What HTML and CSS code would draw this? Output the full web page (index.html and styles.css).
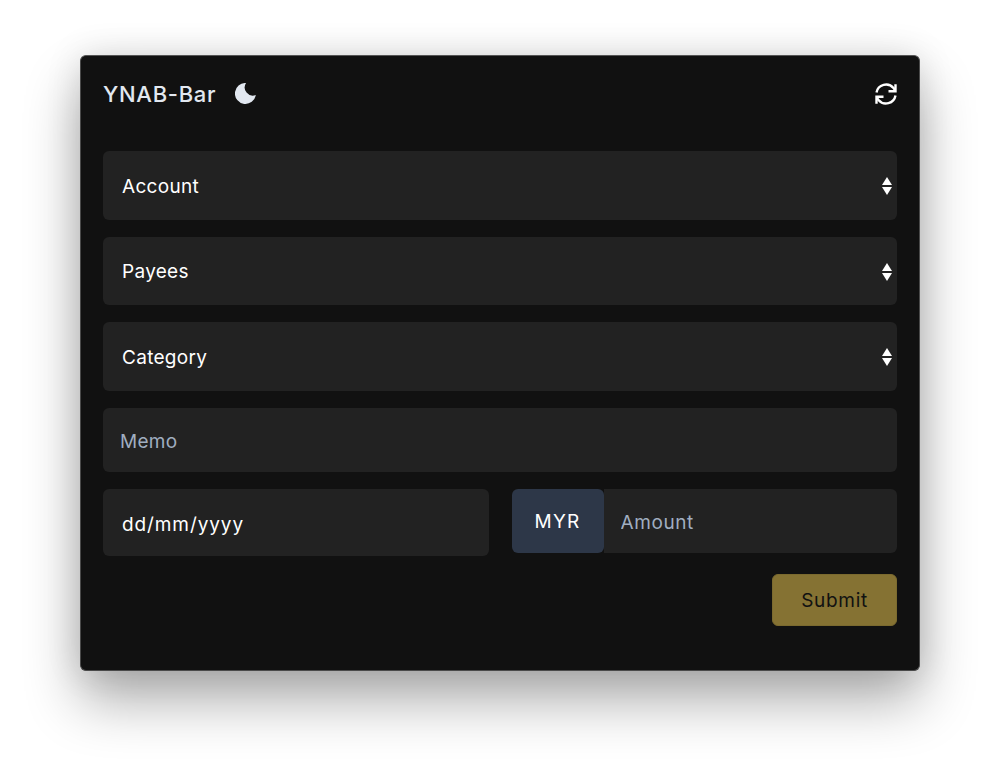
FILE: index.html
```html
<!DOCTYPE html>
<html lang="en">
<head>
    <meta charset="UTF-8">
    <title>YNAB-Bar</title>
    <link rel="stylesheet" href="styles.css">
</head>
<body>
    <main class="window">
        <header class="top-bar">
            <div class="brand">
                <h1>YNAB-Bar</h1>
                <button class="icon-btn" type="button" aria-label="Toggle theme">
                    <svg width="21" height="21" viewBox="0 0 20 20" fill="#e2e8f0"><path d="M10.5 0A10 10 0 1 0 19.8 11.5A7.8 7.8 0 0 1 10.5 0z"/></svg>
                </button>
            </div>
            <button class="icon-btn refresh-btn" type="button" aria-label="Refresh">
                <svg width="24" height="24" viewBox="0 0 24 24" fill="none" stroke="#fff" stroke-width="2.4"><path d="M2.5 10.5A9.7 9.7 0 0 1 19.5 6L21 8"/><path d="M21.5 2.2v7h-7"/><path d="M21.5 13.5A9.7 9.7 0 0 1 4.5 18L3 16"/><path d="M2.5 21.8v-7h7"/></svg>
            </button>
        </header>

        <form class="entry-form">
            <div class="select-wrap">
                <select class="field select-field"><option>Account</option></select>
                <svg class="select-arrows" width="10" height="20" viewBox="0 0 10 20" fill="#fff"><path d="M5 1l5 8H0z"/><path d="M5 19l5-8H0z"/></svg>
            </div>
            <div class="select-wrap">
                <select class="field select-field"><option>Payees</option></select>
                <svg class="select-arrows" width="10" height="20" viewBox="0 0 10 20" fill="#fff"><path d="M5 1l5 8H0z"/><path d="M5 19l5-8H0z"/></svg>
            </div>
            <div class="select-wrap">
                <select class="field select-field"><option>Category</option></select>
                <svg class="select-arrows" width="10" height="20" viewBox="0 0 10 20" fill="#fff"><path d="M5 1l5 8H0z"/><path d="M5 19l5-8H0z"/></svg>
            </div>
            <input class="field memo-field" type="text" placeholder="Memo">
            <div class="split-row">
                <input class="field date-field" type="text" value="dd/mm/yyyy">
                <div class="amount-group">
                    <span class="currency">MYR</span>
                    <input class="field amount-field" type="text" placeholder="Amount">
                </div>
            </div>
            <div class="actions">
                <button class="submit-btn" type="submit">Submit</button>
            </div>
        </form>
    </main>
</body>
</html>
```

FILE: styles.css
```css
* {
    padding: 0;
    margin: 0;
    box-sizing: border-box;
}

body {
    font-family: Inter, "Liberation Sans", sans-serif;
    background-color: #fff;
    height: 776px;
    padding: 55px 80px 0;
    overflow: hidden;
}

/* App window */
.window {
    height: 616px;
    padding: 0 22px;
    background-color: #111;
    border: 1px solid #4a4a4a;
    border-top-color: #555;
    border-radius: 6px;
    box-shadow: 0 30px 55px rgba(0, 0, 0, 0.32), 0 0 36px rgba(0, 0, 0, 0.12);
}

.top-bar {
    display: flex;
    justify-content: space-between;
    align-items: center;
    height: 75px;
}

.brand {
    display: flex;
    align-items: center;
    gap: 19px;
}

.brand h1 {
    font-size: 22px;
    font-weight: 500;
    letter-spacing: 0.7px;
    color: #e2e8f0;
}

.icon-btn {
    display: flex;
    background: none;
    border: none;
}

.refresh-btn {
    margin-right: -1px;
}

/* Form */
.entry-form {
    display: flex;
    flex-direction: column;
    gap: 17px;
    margin-top: 20px;
}

.field {
    display: block;
    width: 100%;
    border: none;
    outline: none;
    font-family: inherit;
    font-size: 19px;
    font-weight: 400;
    letter-spacing: 0.3px;
    color: #fff;
    background-color: #222;
    border-radius: 6px;
}

.field::placeholder {
    color: #a0aec0;
    opacity: 1;
}

.select-wrap {
    position: relative;
}

.select-field {
    height: 68.5px;
    padding: 2px 40px 0 19px;
    appearance: none;
}

.select-arrows {
    position: absolute;
    top: 25px;
    right: 5px;
}

.memo-field {
    height: 64px;
    padding: 4px 17px 0;
}

.split-row {
    display: grid;
    grid-template-columns: 1fr 1fr;
    align-items: start;
    gap: 23px;
}

.date-field {
    height: 67px;
    padding: 4px 19px 0;
    letter-spacing: 0.9px;
}

.amount-group {
    display: flex;
    height: 64px;
}

.currency {
    display: flex;
    align-items: center;
    justify-content: center;
    flex: 0 0 92px;
    padding-top: 2px;
    font-size: 19px;
    font-weight: 400;
    letter-spacing: 1.2px;
    color: #fff;
    background-color: #2d3748;
    border-radius: 6px;
}

.amount-field {
    flex: 1;
    min-width: 0;
    padding: 4px 17px 0;
    letter-spacing: 0.6px;
    border-radius: 0 6px 6px 0;
}

.actions {
    display: flex;
    justify-content: flex-end;
    margin-top: 1px;
}

.submit-btn {
    width: 125px;
    height: 52px;
    padding-top: 2px;
    font-family: inherit;
    font-size: 19px;
    font-weight: 400;
    letter-spacing: 0.7px;
    color: #111;
    background-color: #857233;
    border: 1px solid #7b6a2f;
    border-radius: 6px;
}
```
